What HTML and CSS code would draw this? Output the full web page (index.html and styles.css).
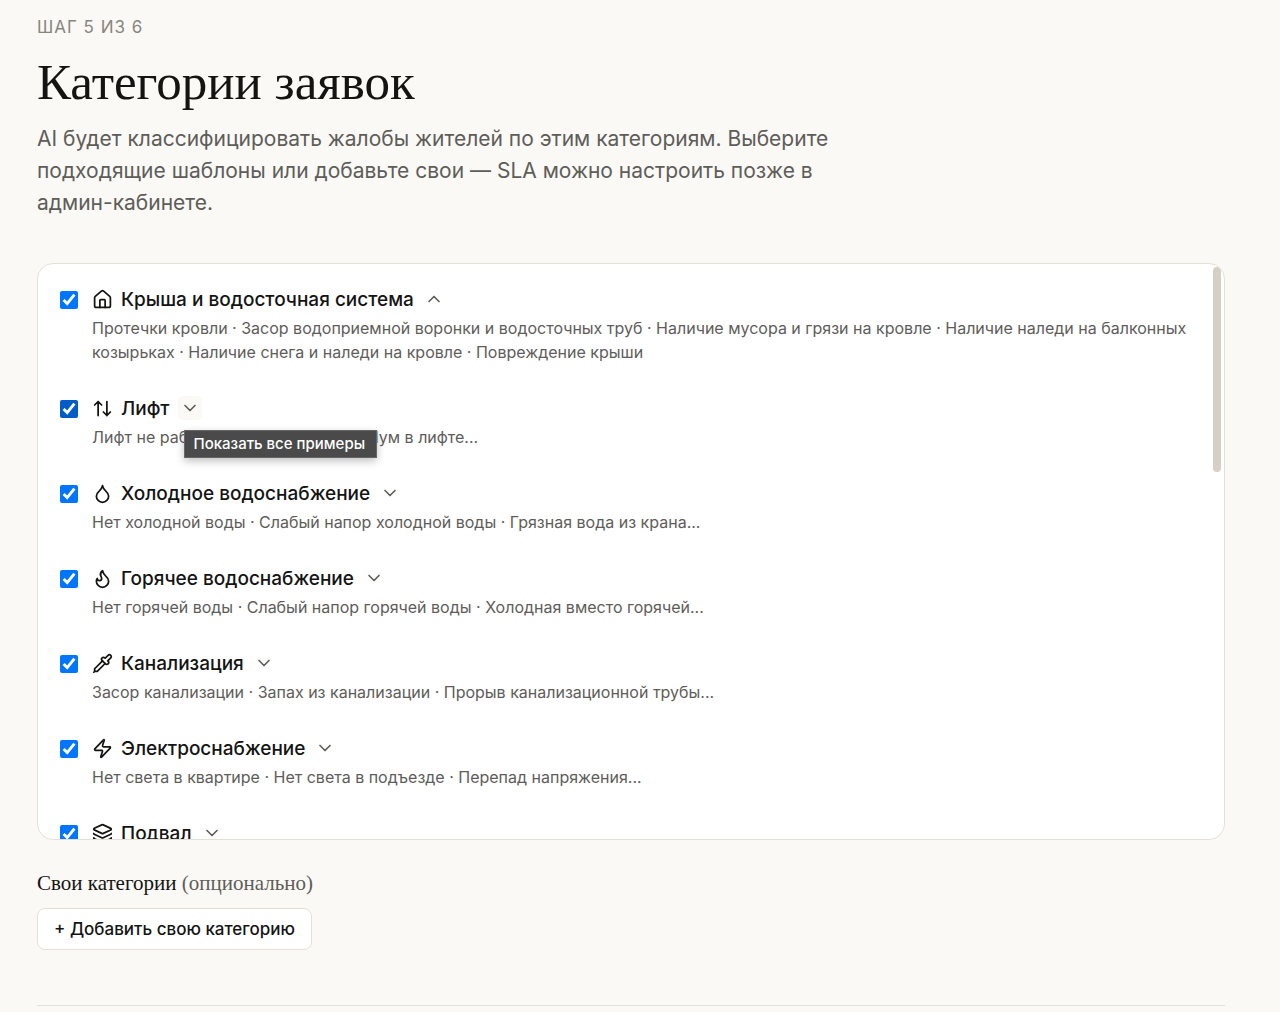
FILE: index.html
```
<!DOCTYPE html>
<html lang="ru">
<head>
	<meta charset="utf-8">
	<title>Категории заявок</title>
	<link rel="stylesheet" href="styles.css">
</head>
<body>
	<svg class="sprite" aria-hidden="true">
		<symbol id="down" viewBox="0 0 24 24"><path d="m6 9 6 6 6-6"/></symbol>
		<symbol id="up" viewBox="0 0 24 24"><path d="m18 15-6-6-6 6"/></symbol>
	</svg>
	<main class="page">
		<header class="intro">
			<p class="step">ШАГ 5 ИЗ 6</p>
			<h1>Категории заявок</h1>
			<p class="lead">AI будет классифицировать жалобы жителей по этим категориям. Выберите подходящие шаблоны или добавьте свои — SLA можно настроить позже в админ-кабинете.</p>
		</header>

		<div class="panel">
			<div class="category">
				<input type="checkbox" id="roof" checked>
				<div class="details">
					<div class="title">
						<svg class="icon" viewBox="0 0 24 24"><path d="M15 21v-8a1 1 0 0 0-1-1h-4a1 1 0 0 0-1 1v8"/><path d="M3 10a2 2 0 0 1 .709-1.528l7-5.999a2 2 0 0 1 2.582 0l7 5.999A2 2 0 0 1 21 10v9a2 2 0 0 1-2 2H5a2 2 0 0 1-2-2z"/></svg>
						<label for="roof">Крыша и водосточная система</label>
						<button type="button" class="toggle" aria-label="Скрыть примеры"><svg><use href="#up"/></svg></button>
					</div>
					<p>Протечки кровли · Засор водоприемной воронки и водосточных труб · Наличие мусора и грязи на кровле · Наличие наледи на балконных козырьках · Наличие снега и наледи на кровле · Повреждение крыши</p>
				</div>
			</div>
			<div class="category">
				<input type="checkbox" id="lift" class="pressed" checked>
				<div class="details">
					<div class="title">
						<svg class="icon" viewBox="0 0 24 24"><path d="m21 16-4 4-4-4M17 20V4M3 8l4-4 4 4M7 4v16"/></svg>
						<label for="lift">Лифт</label>
						<button type="button" class="toggle active" aria-label="Показать все примеры"><svg><use href="#down"/></svg><span class="tooltip">Показать все примеры</span></button>
					</div>
					<p>Лифт не работает · Застрял лифт · Шум в лифте...</p>
				</div>
			</div>
			<div class="category">
				<input type="checkbox" id="cold" checked>
				<div class="details">
					<div class="title">
						<svg class="icon" viewBox="0 0 24 24"><path d="M12 22a7 7 0 0 0 7-7c0-2-1-3.900-3-5.500s-3.500-4-4-6.500c-.5 2.500-2 4.900-4 6.500C6 11.100 5 13 5 15a7 7 0 0 0 7 7z"/></svg>
						<label for="cold">Холодное водоснабжение</label>
						<button type="button" class="toggle" aria-label="Показать все примеры"><svg><use href="#down"/></svg></button>
					</div>
					<p>Нет холодной воды · Слабый напор холодной воды · Грязная вода из крана...</p>
				</div>
			</div>
			<div class="category">
				<input type="checkbox" id="hot" checked>
				<div class="details">
					<div class="title">
						<svg class="icon" viewBox="0 0 24 24"><path d="M8.500 14.500A2.500 2.500 0 0 0 11 12c0-1.380-.5-2-1-3-1.072-2.143-.224-4.054 2-6 .5 2.500 2 4.900 4 6.500 2 1.600 3 3.500 3 5.500a7 7 0 1 1-14 0c0-1.153.433-2.294 1-3a2.500 2.500 0 0 0 2.500 2.500z"/></svg>
						<label for="hot">Горячее водоснабжение</label>
						<button type="button" class="toggle" aria-label="Показать все примеры"><svg><use href="#down"/></svg></button>
					</div>
					<p>Нет горячей воды · Слабый напор горячей воды · Холодная вместо горячей...</p>
				</div>
			</div>
			<div class="category">
				<input type="checkbox" id="sewer" checked>
				<div class="details">
					<div class="title">
						<svg class="icon" viewBox="0 0 24 24"><path d="m2 22 1-1h3l9-9M3 21v-3l9-9"/><path d="m15 6 3.400-3.400a2.100 2.100 0 1 1 3 3L18 9l.4.400a2.100 2.100 0 1 1-3 3l-3.800-3.800a2.100 2.100 0 1 1 3-3l.4.400z"/></svg>
						<label for="sewer">Канализация</label>
						<button type="button" class="toggle" aria-label="Показать все примеры"><svg><use href="#down"/></svg></button>
					</div>
					<p>Засор канализации · Запах из канализации · Прорыв канализационной трубы...</p>
				</div>
			</div>
			<div class="category">
				<input type="checkbox" id="power" checked>
				<div class="details">
					<div class="title">
						<svg class="icon" viewBox="0 0 24 24"><path d="M4 14a1 1 0 0 1-.78-1.630l9.900-10.200a.5.5 0 0 1 .860.460l-1.920 6.020A1 1 0 0 0 13 10h7a1 1 0 0 1 .780 1.630l-9.900 10.200a.5.5 0 0 1-.860-.460l1.920-6.020A1 1 0 0 0 11 14z"/></svg>
						<label for="power">Электроснабжение</label>
						<button type="button" class="toggle" aria-label="Показать все примеры"><svg><use href="#down"/></svg></button>
					</div>
					<p>Нет света в квартире · Нет света в подъезде · Перепад напряжения...</p>
				</div>
			</div>
			<div class="category">
				<input type="checkbox" id="cellar" checked>
				<div class="details">
					<div class="title">
						<svg class="icon" viewBox="0 0 24 24"><path d="M12.830 2.180a2 2 0 0 0-1.660 0L2.600 6.080a1 1 0 0 0 0 1.830l8.580 3.910a2 2 0 0 0 1.660 0l8.580-3.900a1 1 0 0 0 0-1.830z"/><path d="M2 12a1 1 0 0 0 .580.910l8.600 3.910a2 2 0 0 0 1.650 0l8.580-3.900A1 1 0 0 0 22 12M2 17a1 1 0 0 0 .580.910l8.600 3.910a2 2 0 0 0 1.650 0l8.580-3.900A1 1 0 0 0 22 17"/></svg>
						<label for="cellar">Подвал</label>
						<button type="button" class="toggle" aria-label="Показать все примеры"><svg><use href="#down"/></svg></button>
					</div>
				</div>
			</div>
			<span class="scroll-thumb"></span>
		</div>

		<section class="custom">
			<h2>Свои категории <span>(опционально)</span></h2>
			<button type="button" class="add">+ Добавить свою категорию</button>
		</section>
		<hr>
	</main>
</body>
</html>
```

FILE: styles.css
```
* {
	box-sizing: border-box;
}
body {
	margin: 0;
	background: #faf9f5;
	color: #141413;
	font-family: Inter, "Liberation Sans", sans-serif;
}
h1, h2, p {
	margin: 0;
}
button {
	font: inherit;
	color: inherit;
}
.sprite {
	display: none;
}
.page {
	padding: 15px 55px 0 37px;
}
.step {
	color: #87867f;
	font-size: 17px;
	line-height: 24px;
	letter-spacing: 1px;
}
h1 {
	margin-top: 13px;
	font: 400 51px/60px "Liberation Serif", serif;
}
.lead {
	max-width: 800px;
	margin-top: 11px;
	color: #5e5d59;
	font-size: 21px;
	line-height: 32px;
}
.panel {
	position: relative;
	height: 577px;
	margin-top: 44px;
	padding: 22px 34px 0 22px;
	overflow: hidden;
	border: 1px solid #e3e1d7;
	border-radius: 16px;
	background: #fff;
}
.scroll-thumb {
	position: absolute;
	top: 3px;
	right: 3px;
	width: 8px;
	height: 205px;
	border-radius: 4px;
	background: #d4d0c4;
}
.category {
	display: flex;
	gap: 14px;
	margin-bottom: 31px;
}
.category input {
	width: 18px;
	height: 18px;
	margin: 5px 0 0;
	flex: none;
	accent-color: #0075ff;
}
.category .pressed {
	accent-color: #005cc8;
}
.title {
	display: flex;
	align-items: center;
	height: 26px;
	font-size: 19px;
	font-weight: 500;
}
svg {
	fill: none;
	stroke: currentColor;
	stroke-width: 2;
	stroke-linecap: round;
	stroke-linejoin: round;
}
.icon {
	width: 21px;
	height: 21px;
	margin-right: 8px;
}
.toggle {
	position: relative;
	display: flex;
	align-items: center;
	justify-content: center;
	width: 24px;
	height: 24px;
	margin-left: 8px;
	padding: 0;
	border: 0;
	border-radius: 5px;
	background: none;
	color: #5e5d59;
}
.toggle svg {
	width: 20px;
	height: 20px;
}
.toggle.active {
	background: #faf9f5;
}
.tooltip {
	position: absolute;
	top: 34px;
	left: 6px;
	padding: 3px 11px 3px 9px;
	border: 1px solid #666;
	background: #4a4a4a;
	box-shadow: 0 3px 8px rgba(0, 0, 0, 0.25);
	color: #fff;
	font-size: 15px;
	line-height: 20px;
	white-space: nowrap;
}
.details p {
	margin-top: 4px;
	color: #5e5d59;
	font-size: 16px;
	line-height: 24px;
}
.custom {
	margin-top: 29px;
}
h2 {
	font: 400 21px/28px "Liberation Serif", serif;
}
h2 span {
	color: #5e5d59;
}
.add {
	margin-top: 11px;
	padding: 0 16px;
	height: 42px;
	border: 1px solid #e3e1d7;
	border-radius: 8px;
	background: #fff;
	font-size: 17px;
	font-weight: 500;
}
hr {
	margin: 55px 0 0;
	border: 0;
	border-top: 1px solid #e3e1d7;
}
```
